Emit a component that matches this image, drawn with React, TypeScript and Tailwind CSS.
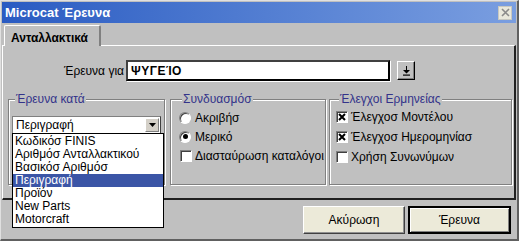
import React from 'react';

const FONT = { fontFamily: '"Liberation Sans", Arial, sans-serif' };

const options = [
  'Κωδικόσ FINIS',
  'Αριθμόσ Ανταλλακτικού',
  'Βασικόσ Αριθμόσ',
  'Περιγραφή',
  'Προϊόν',
  'New Parts',
  'Motorcraft',
];

function Radio({ checked, label }: { checked?: boolean; label: string }) {
  return (
    <div className="flex items-center gap-[4px] h-[19px]">
      <span className="w-[12px] h-[12px] rounded-full bg-white border border-t-[#808080] border-l-[#808080] border-b-white border-r-white shadow-[inset_1px_1px_0_#404040] flex items-center justify-center">
        {checked && <span className="w-[5px] h-[5px] rounded-full bg-black" />}
      </span>
      <span>{label}</span>
    </div>
  );
}

function Check({ checked, label }: { checked?: boolean; label: string }) {
  return (
    <div className="flex items-center gap-[3px] h-[20px]">
      <span className="w-[12px] h-[12px] bg-white border border-t-[#808080] border-l-[#808080] border-b-white border-r-white shadow-[inset_1px_1px_0_#404040] flex items-center justify-center">
        {checked && (
          <svg width="8" height="8" viewBox="0 0 8 8">
            <path d="M1 1 L7 7 M7 1 L1 7" stroke="#000" strokeWidth="2" />
          </svg>
        )}
      </span>
      <span>{label}</span>
    </div>
  );
}

function Group({ title, className, children }: { title: string; className: string; children: React.ReactNode }) {
  return (
    <fieldset className={`border border-[#808080] shadow-[inset_1px_1px_0_#fff,1px_1px_0_#fff] ${className}`}>
      <legend className="ml-[3px] px-[1px] bg-[#c0c0c0] text-[#33338a] leading-[14px]">{title}</legend>
      {children}
    </fieldset>
  );
}

export default function App() {
  return (
    <div style={FONT} className="w-[519px] h-[241px] bg-[#c0c0c0] text-[12px] text-black border-t border-l border-t-[#e0e0e0] border-l-[#e0e0e0] border-r-2 border-b-2 border-r-[#606060] border-b-[#606060] flex flex-col overflow-hidden">
      {/* title bar */}
      <div className="mx-[1px] mt-[1px] h-[21px] bg-gradient-to-r from-[#2a5bc2] to-[#7a9ee0] flex items-center justify-between pl-[3px] pr-[4px]">
        <span className="text-white font-bold text-[13px]">Microcat Έρευνα</span>
        <span className="w-[14px] h-[14px] bg-[#e9e8dc] border border-[#c8c8c0] flex items-center justify-center">
          <svg width="9" height="9" viewBox="0 0 9 9">
            <path d="M1 1 L8 8 M8 1 L1 8" stroke="#8a8a8a" strokeWidth="1.6" />
          </svg>
        </span>
      </div>

      {/* tab strip */}
      <div className="h-[22px] flex items-end pl-[3px] pt-[2px]">
        <div className="relative z-10 -mb-[1px] w-[97px] h-[21px] bg-[#c0c0c0] border-t border-l border-white border-r-2 border-r-[#808080] rounded-t-[2px] font-bold pl-[6px] pt-[3px]">
          Ανταλλακτικά
        </div>
      </div>

      {/* tab panel */}
      <div className="ml-[1px] w-[514px] h-[155px] border-t border-l border-white border-r-2 border-b-2 border-r-[#202020] border-b-[#202020] flex flex-col">
        <div className="mt-[14px] flex items-center">
          <span className="w-[121px] text-right">Έρευνα για</span>
          <div className="ml-[2px] w-[264px] h-[21px] bg-white border-2 border-t-[#404040] border-l-[#404040] border-b-black border-r-black shadow-[1px_1px_0_#fff] flex items-center pl-[3px] font-bold tracking-[0.5px]">
            ΨΥΓΕΊΟ
          </div>
          <div className="ml-[7px] w-[18px] h-[19px] bg-[#c0c0c0] border border-t-white border-l-white border-b-black border-r-black shadow-[inset_-1px_-1px_0_#808080] flex items-center justify-center">
            <svg width="9" height="10" viewBox="0 0 9 10">
              <path d="M4 0 H5 V4 H8 L4.5 7.5 L1 4 H4 Z" fill="#000" />
              <rect x="1" y="8.5" width="7" height="1.2" fill="#000" />
            </svg>
          </div>
        </div>

        <div className="mt-[11px] flex items-start pl-[5px]">
          <Group title="Έρευνα κατά" className="w-[155px] h-[93px] px-[3px]">
            <div className="relative mt-[10px] w-[149px]">
              <div className="h-[18px] bg-white border border-t-[#808080] border-l-[#808080] border-b-[#404040] border-r-[#404040] flex items-center justify-between pl-[3px] pr-[1px]">
                <span>Περιγραφή</span>
                <span className="w-[14px] h-[14px] bg-[#d4d0c8] border border-t-white border-l-white border-b-[#808080] border-r-[#808080] flex items-center justify-center">
                  <svg width="7" height="4" viewBox="0 0 7 4">
                    <path d="M0 0 H7 L3.5 4 Z" fill="#000" />
                  </svg>
                </span>
              </div>
              <div className="absolute left-0 top-[17px] z-20 w-[152px] bg-white border border-black pt-[1px] pb-[1px]">
                {options.map((o) => (
                  <div
                    key={o}
                    className={`h-[13px] leading-[13px] pl-[2px] ${o === 'Περιγραφή' ? 'bg-[#3b55a6] text-white' : ''}`}
                  >
                    {o}
                  </div>
                ))}
              </div>
            </div>
          </Group>

          <Group title="Συνδυασμόσ" className="ml-[5px] w-[156px] h-[93px] pl-[8px]">
            <div className="mt-[2px] flex flex-col">
              <Radio label="Ακριβήσ" />
              <Radio checked label="Μερικό" />
              <div className="pl-[1px]">
                <Check label="Διασταύρωση καταλόγοι" />
              </div>
            </div>
          </Group>

          <Group title="Έλεγχοι Ερμηνείας" className="ml-[3px] w-[183px] h-[93px] pl-[6px]">
            <div className="mt-[1px] flex flex-col">
              <Check checked label="Έλεγχοσ Μοντέλου" />
              <Check checked label="Έλεγχοσ Ημερομηνίασ" />
              <Check label="Χρήση Συνωνύμων" />
            </div>
          </Group>
        </div>
      </div>

      {/* buttons */}
      <div className="mt-[6px] flex justify-end gap-[3px] pr-[6px]">
        <button className="w-[102px] h-[28px] bg-[#ecead9] border border-t-white border-l-white border-b-[#404040] border-r-[#404040] shadow-[inset_-1px_-1px_0_#909090]">
          Ακύρωση
        </button>
        <button className="w-[103px] h-[28px] bg-[#ecead9] border-2 border-black shadow-[inset_1px_1px_0_#fff,inset_-1px_-1px_0_#808080]">
          Έρευνα
        </button>
      </div>
    </div>
  );
}
